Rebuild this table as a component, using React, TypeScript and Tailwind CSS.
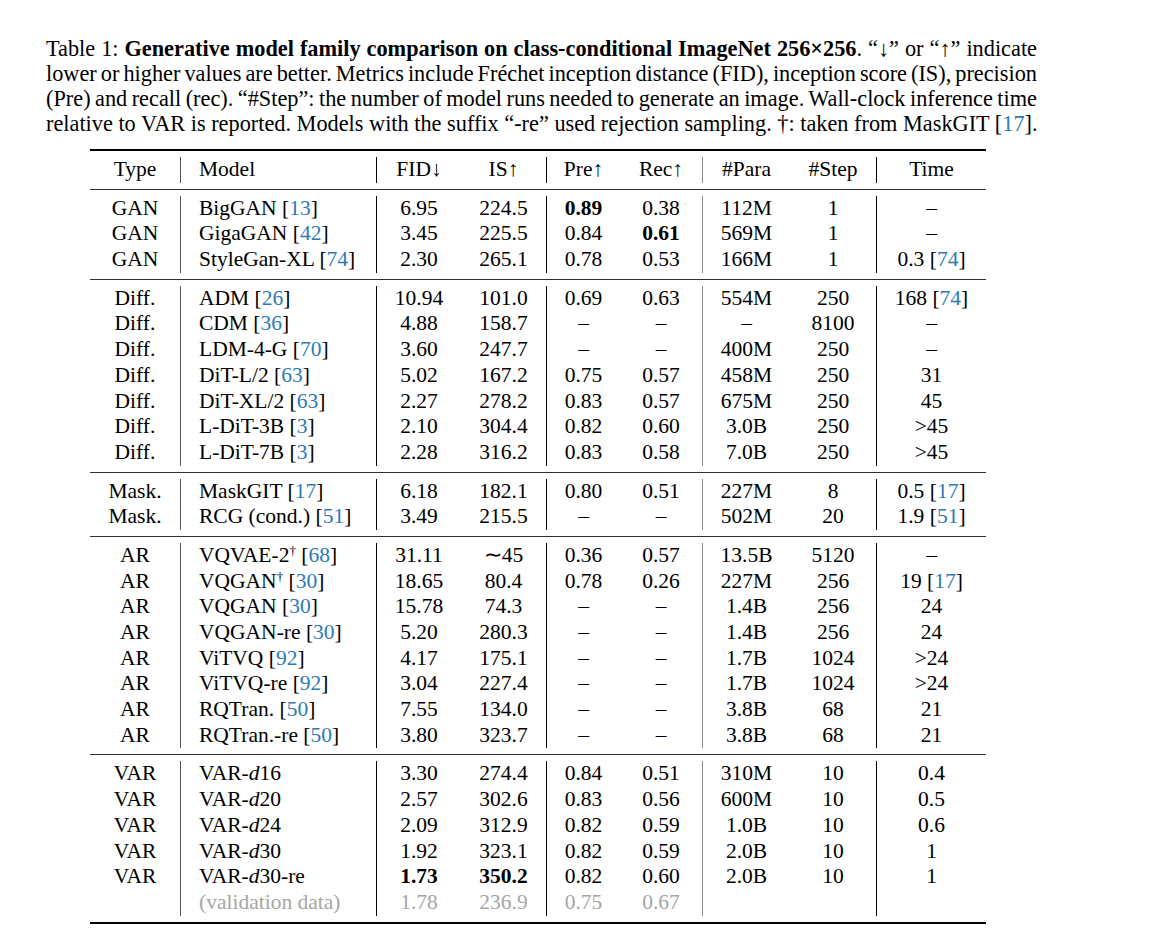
import type { ReactNode } from "react"

const cite = (n: string) => (
  <>
    [<span className="text-[#2c7bb6]">{n}</span>]
  </>
)

const dag = <sup className="text-[13px]">†</sup>
const d = (n: string) => (
  <>
    <i>d</i>
    {n}
  </>
)

type Row = ReactNode[]

const groups: Row[][] = [
  [
    ["GAN", <>BigGAN {cite("13")}</>, "6.95", "224.5", <b>0.89</b>, "0.38", "112M", "1", "–"],
    ["GAN", <>GigaGAN {cite("42")}</>, "3.45", "225.5", "0.84", <b>0.61</b>, "569M", "1", "–"],
    ["GAN", <>StyleGan-XL {cite("74")}</>, "2.30", "265.1", "0.78", "0.53", "166M", "1", <>0.3 {cite("74")}</>],
  ],
  [
    ["Diff.", <>ADM {cite("26")}</>, "10.94", "101.0", "0.69", "0.63", "554M", "250", <>168 {cite("74")}</>],
    ["Diff.", <>CDM {cite("36")}</>, "4.88", "158.7", "–", "–", "–", "8100", "–"],
    ["Diff.", <>LDM-4-G {cite("70")}</>, "3.60", "247.7", "–", "–", "400M", "250", "–"],
    ["Diff.", <>DiT-L/2 {cite("63")}</>, "5.02", "167.2", "0.75", "0.57", "458M", "250", "31"],
    ["Diff.", <>DiT-XL/2 {cite("63")}</>, "2.27", "278.2", "0.83", "0.57", "675M", "250", "45"],
    ["Diff.", <>L-DiT-3B {cite("3")}</>, "2.10", "304.4", "0.82", "0.60", "3.0B", "250", ">45"],
    ["Diff.", <>L-DiT-7B {cite("3")}</>, "2.28", "316.2", "0.83", "0.58", "7.0B", "250", ">45"],
  ],
  [
    ["Mask.", <>MaskGIT {cite("17")}</>, "6.18", "182.1", "0.80", "0.51", "227M", "8", <>0.5 {cite("17")}</>],
    ["Mask.", <>RCG (cond.) {cite("51")}</>, "3.49", "215.5", "–", "–", "502M", "20", <>1.9 {cite("51")}</>],
  ],
  [
    ["AR", <>VQVAE-2{dag} {cite("68")}</>, "31.11", "∼45", "0.36", "0.57", "13.5B", "5120", "–"],
    ["AR", <>VQGAN{dag} {cite("30")}</>, "18.65", "80.4", "0.78", "0.26", "227M", "256", <>19 {cite("17")}</>],
    ["AR", <>VQGAN {cite("30")}</>, "15.78", "74.3", "–", "–", "1.4B", "256", "24"],
    ["AR", <>VQGAN-re {cite("30")}</>, "5.20", "280.3", "–", "–", "1.4B", "256", "24"],
    ["AR", <>ViTVQ {cite("92")}</>, "4.17", "175.1", "–", "–", "1.7B", "1024", ">24"],
    ["AR", <>ViTVQ-re {cite("92")}</>, "3.04", "227.4", "–", "–", "1.7B", "1024", ">24"],
    ["AR", <>RQTran. {cite("50")}</>, "7.55", "134.0", "–", "–", "3.8B", "68", "21"],
    ["AR", <>RQTran.-re {cite("50")}</>, "3.80", "323.7", "–", "–", "3.8B", "68", "21"],
  ],
  [
    ["VAR", <>VAR-{d("16")}</>, "3.30", "274.4", "0.84", "0.51", "310M", "10", "0.4"],
    ["VAR", <>VAR-{d("20")}</>, "2.57", "302.6", "0.83", "0.56", "600M", "10", "0.5"],
    ["VAR", <>VAR-{d("24")}</>, "2.09", "312.9", "0.82", "0.59", "1.0B", "10", "0.6"],
    ["VAR", <>VAR-{d("30")}</>, "1.92", "323.1", "0.82", "0.59", "2.0B", "10", "1"],
    ["VAR", <>VAR-{d("30")}-re</>, <b>1.73</b>, <b>350.2</b>, "0.82", "0.60", "2.0B", "10", "1"],
    [
      "",
      <span className="text-[#a6a6a6]">(validation data)</span>,
      <span className="text-[#a6a6a6]">1.78</span>,
      <span className="text-[#a6a6a6]">236.9</span>,
      <span className="text-[#a6a6a6]">0.75</span>,
      <span className="text-[#a6a6a6]">0.67</span>,
      "",
      "",
      "",
    ],
  ],
]

const header: Row = ["Type", "Model", "FID↓", "IS↑", "Pre↑", "Rec↑", "#Para", "#Step", "Time"]

// separators sit on the left of Model, FID, Pre, #Para and Time
const cellCls = [
  "text-center",
  "border-l border-[#555] pl-[18px] text-left",
  "border-l border-black text-center",
  "text-center",
  "border-l border-black text-center",
  "text-center",
  "border-l border-[#888] text-center",
  "text-center",
  "border-l border-black text-center",
]

function TableRow({ cells }: { cells: Row }) {
  return (
    <div className="grid h-[25.7px] grid-cols-[90px_196px_85px_85px_74px_82px_88px_86px_110px] leading-[25.7px]">
      {cells.map((c, i) => (
        <div key={i} className={`whitespace-nowrap ${cellCls[i]}`}>
          {c}
        </div>
      ))}
    </div>
  )
}

export default function App() {
  return (
    <div className="h-[943px] w-[1150px] bg-white font-['Liberation_Serif',serif] text-black">
      {/* Caption */}
      <div className="ml-[46px] w-[991px] pt-[36px] text-[22.3px] leading-[25px]">
        <div className="whitespace-nowrap text-justify [text-align-last:justify]">
          Table 1: <b>Generative model family comparison on class-conditional ImageNet 256×256</b>. “↓” or “↑” indicate
        </div>
        <div className="whitespace-nowrap text-justify [word-spacing:-2px] [text-align-last:justify]">
          lower or higher values are better. Metrics include Fréchet inception distance (FID), inception score (IS), precision
        </div>
        <div className="whitespace-nowrap text-justify [word-spacing:-2px] [text-align-last:justify]">
          (Pre) and recall (rec). “#Step”: the number of model runs needed to generate an image. Wall-clock inference time
        </div>
        <div className="whitespace-nowrap">
          relative to VAR is reported. Models with the suffix “-re” used rejection sampling. †: taken from MaskGIT {cite("17")}.
        </div>
      </div>

      {/* Table */}
      <div className="ml-[90px] mt-[13px] w-[896px] border-y-2 border-black text-[21.5px]">
        <div className="border-b border-[#333] py-[6px]">
          <TableRow cells={header} />
        </div>
        {groups.map((g, gi) => (
          <div key={gi} className={`py-[6px] ${gi < groups.length - 1 ? "border-b border-[#333]" : ""}`}>
            {g.map((r, ri) => (
              <TableRow key={ri} cells={r} />
            ))}
          </div>
        ))}
      </div>
    </div>
  )
}
